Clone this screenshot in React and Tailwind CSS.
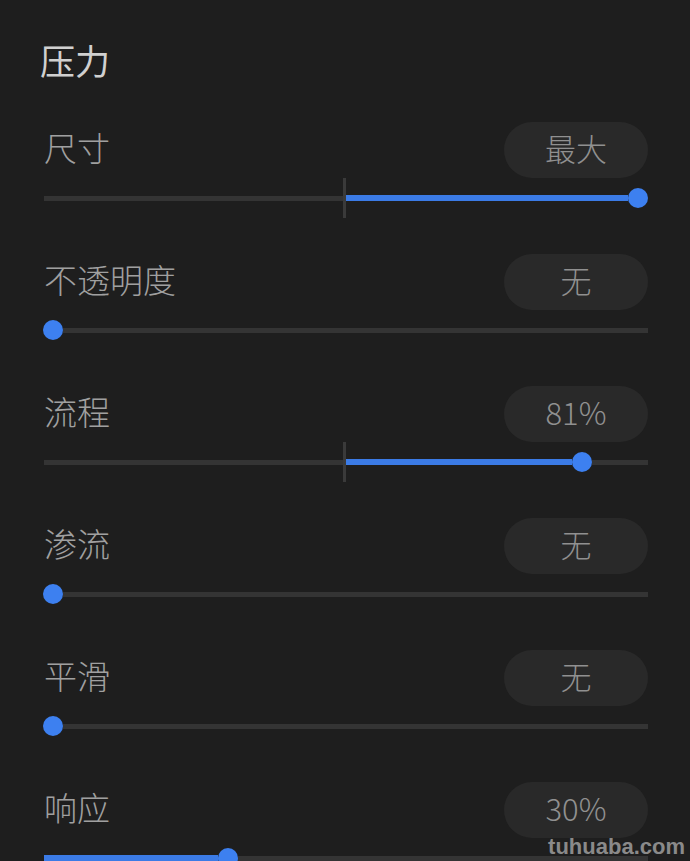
import React from "react";

// 压力设置面板
const rows = [
  { label: "尺寸", value: "最大", thumb: 594, from: 299, tick: true },
  { label: "不透明度", value: "无", thumb: 9, from: 0 },
  { label: "流程", value: "81%", thumb: 538, from: 299, tick: true },
  { label: "渗流", value: "无", thumb: 9, from: 0 },
  { label: "平滑", value: "无", thumb: 9, from: 0 },
  { label: "响应", value: "30%", thumb: 184, from: 0, fill: true },
];

function Slider({ thumb, from, tick, fill }) {
  const start = from + (tick ? 3 : 0);
  const span = thumb - 10 - start;
  const blue = tick || fill;
  return (
    <div className="flex h-[40px] items-center">
      {from > 0 && <div className="h-[5px] shrink-0 bg-[#343434]" style={{ width: from }} />}
      {tick && <div className="h-[40px] w-[3px] shrink-0 bg-[#3a3a3a]" />}
      {span > 0 && (
        <div
          className={blue ? "h-[6px] shrink-0 bg-[#3b7be6]" : "h-[5px] shrink-0 bg-[#343434]"}
          style={{ width: span }}
        />
      )}
      <div
        className="h-[20px] w-[20px] shrink-0 rounded-full bg-[#3d80f0]"
        style={{ marginLeft: span < 0 ? span : 0 }}
      />
      <div className="h-[5px] flex-1 bg-[#343434]" />
    </div>
  );
}

export default function App() {
  return (
    <div
      className="relative h-[861px] overflow-hidden bg-[#1e1e1e] pl-[44px] pr-[42px]"
      style={{ fontFamily: '"Noto Sans CJK SC", "Noto Sans", sans-serif' }}
    >
      <div className="-ml-[4px] pt-[40px] pb-[42px] text-[35px] leading-[40px] font-normal text-[#d0d0d0]">压力</div>

      <div className="flex flex-col gap-[36px]">
        {rows.map((r) => (
          <div key={r.label} className="flex flex-col">
            <div className="flex h-[56px] items-center justify-between">
              <span className="pb-[5px] text-[33px] leading-none font-light text-[#a0a0a0]">{r.label}</span>
              <span className="flex h-[56px] w-[144px] items-center justify-center rounded-full bg-[#292929] pb-[5px] text-[31px] leading-none font-light text-[#909090]">
                {r.value}
              </span>
            </div>
            <Slider {...r} />
          </div>
        ))}
      </div>

      <div
        className="absolute right-[5px] bottom-[3px] text-[22px] font-bold leading-none text-[#8a8a8a]"
        style={{ fontFamily: '"Liberation Sans", Arial, sans-serif' }}
      >
        tuhuaba.com
      </div>
    </div>
  );
}
